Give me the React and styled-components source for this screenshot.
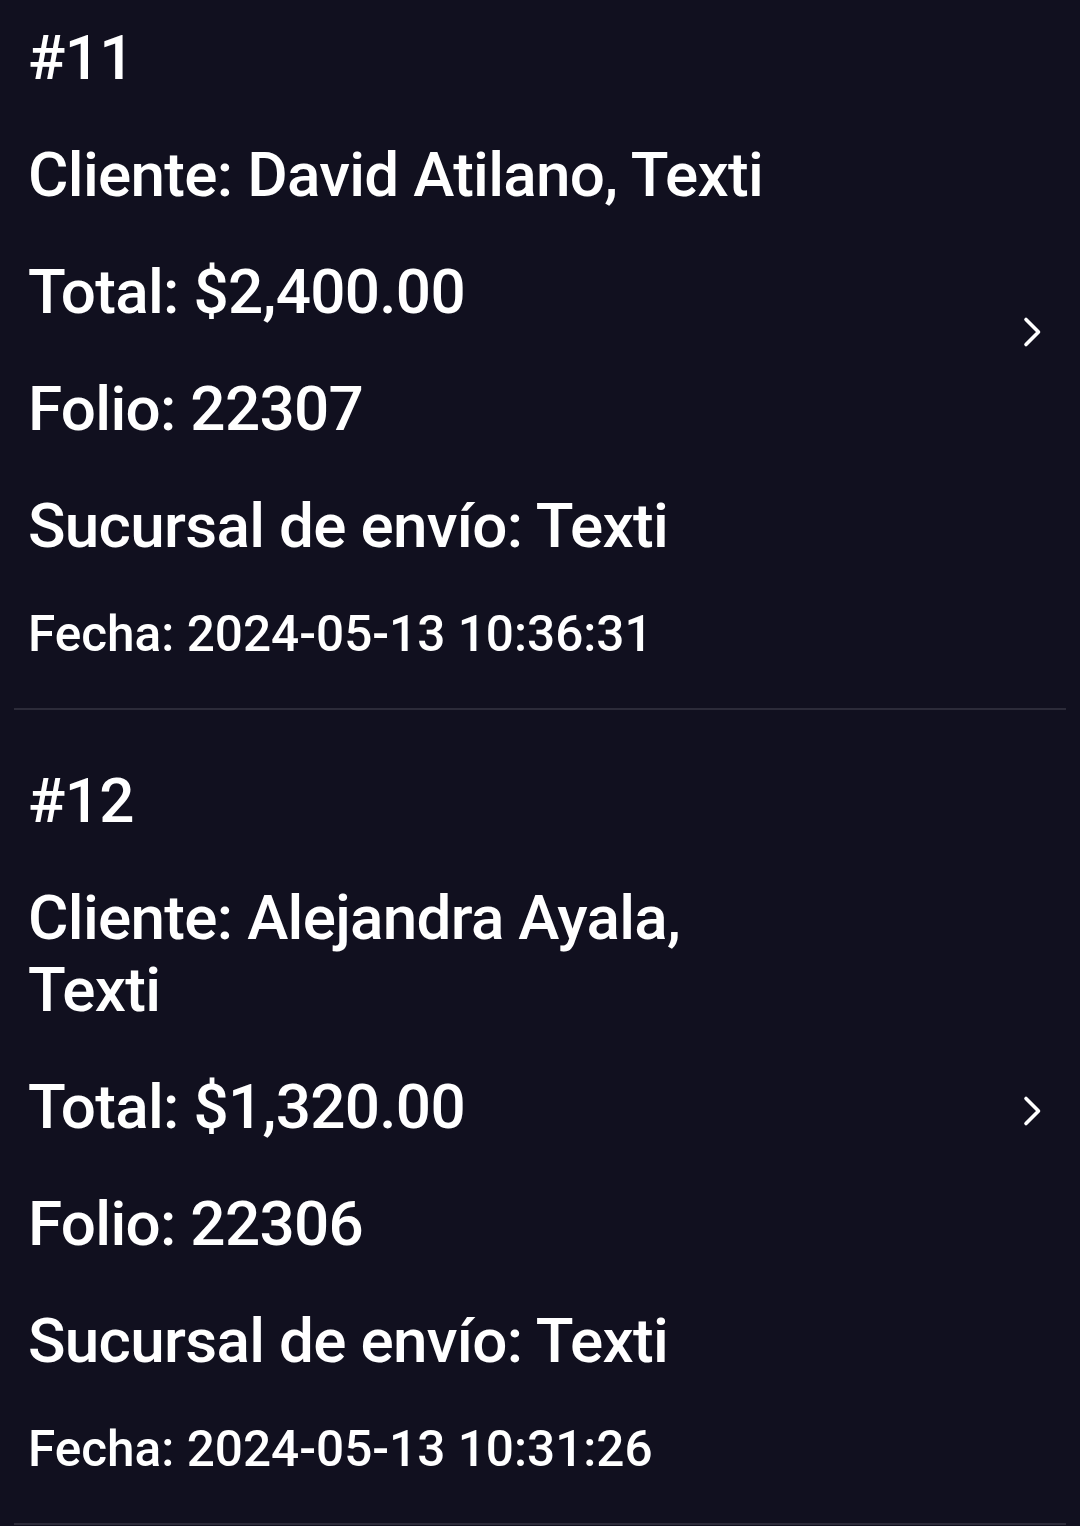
import React from "react";
import styled, { createGlobalStyle } from "styled-components";

const Global = createGlobalStyle`
  html, body { margin: 0; padding: 0; background: #11101f; }
  body { font-family: Roboto, "Noto Sans", "Liberation Sans", sans-serif; color: #ffffff; }
`;

const Viewport = styled.div`
  height: 1526px;
  overflow: hidden;
  background: #11101f;
`;

const List = styled.div`
  display: flex;
  flex-direction: column;
`;

const Card = styled.div`
  display: flex;
  align-items: center;
  margin: 0 14px;
  padding: 55px 0 47px 14px;
  border-bottom: 2px solid #2c2b39;
`;

const Info = styled.div`
  flex: 0 0 760px;
  display: flex;
  flex-direction: column;
  gap: 45px;
`;

const Line = styled.div`
  font-size: ${(p) => (p.$small ? "49.5px" : "62px")};
  line-height: ${(p) => (p.$small ? "54px" : "72px")};
  font-weight: 500;
  letter-spacing: ${(p) => (p.$small ? "0" : "-0.7px")};
`;

const Chevron = styled.div`
  margin-left: auto;
  width: 20px;
  height: 32px;
  margin-right: 24px;
  margin-bottom: 20px;
  display: flex;
`;

const orders = [
  {
    n: 11,
    cliente: "David Atilano, Texti",
    total: "$2,400.00",
    folio: "22307",
    sucursal: "Texti",
    fecha: "2024-05-13 10:36:31",
  },
  {
    n: 12,
    cliente: "Alejandra Ayala, Texti",
    total: "$1,320.00",
    folio: "22306",
    sucursal: "Texti",
    fecha: "2024-05-13 10:31:26",
  },
];

function ChevronIcon() {
  return (
    <svg width="20" height="32" viewBox="0 0 20 32" fill="none">
      <polyline
        points="4,3.5 16.5,16 4,28.5"
        stroke="#ffffff"
        strokeWidth="3.6"
        strokeLinecap="round"
        strokeLinejoin="round"
      />
    </svg>
  );
}

export default function App() {
  return (
    <>
      <Global />
      <Viewport>
        <List style={{ marginTop: -33 }}>
          {orders.map((o) => (
            <Card key={o.n}>
              <Info>
                <Line>#{o.n}</Line>
                <Line>Cliente: {o.cliente}</Line>
                <Line>Total: {o.total}</Line>
                <Line>Folio: {o.folio}</Line>
                <Line>Sucursal de envío: {o.sucursal}</Line>
                <Line $small>Fecha: {o.fecha}</Line>
              </Info>
              <Chevron>
                <ChevronIcon />
              </Chevron>
            </Card>
          ))}
        </List>
      </Viewport>
    </>
  );
}
